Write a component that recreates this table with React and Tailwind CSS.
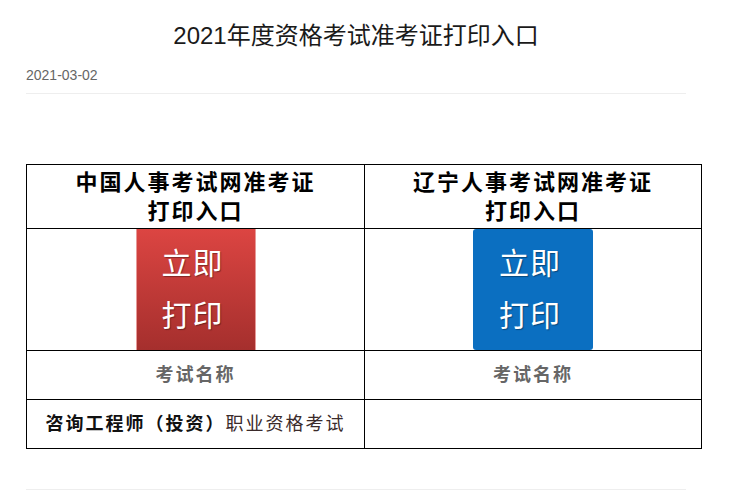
import React from "react";

const sans = { fontFamily: '"Liberation Sans", "Noto Sans CJK SC", sans-serif' };

function PrintButton({ color }) {
  const cls =
    color === "red"
      ? "bg-gradient-to-b from-[#dc4542] to-[#a52f2d] border-x border-[#e79a98]"
      : "bg-[#0b6fc1] rounded-[3px]";
  return (
    <div
      className={`w-[120px] h-[121px] flex flex-col items-center justify-center text-white text-[30px] leading-[52px] tracking-[1px] pr-[6px] ${cls}`}
      style={{ textShadow: "1px 1px 1px rgba(0,0,0,0.35)" }}
    >
      <span>立即</span>
      <span>打印</span>
    </div>
  );
}

export default function App() {
  return (
    <div className="bg-white w-[729px] h-[498px] overflow-hidden" style={sans}>
      <div className="ml-[26px] w-[660px]">
        <h1 className="pt-[18px] text-center text-[24px] leading-[36px] text-[#1a1a1a] font-normal">
          2021年度资格考试准考证打印入口
        </h1>
        <div className="mt-[11px] pb-[8px] text-[14px] leading-[20px] text-[#666] border-b border-[#eeeeee]">
          2021-03-02
        </div>
        <div className="mt-[70px] w-[676px] grid grid-cols-[338px_337px] border-l border-t border-black text-black">
          <div className="h-[64px] border-r border-b border-black flex flex-col items-center justify-center text-[22px] leading-[29px] font-bold tracking-[2px]">
            <span>中国人事考试网准考证</span>
            <span>打印入口</span>
          </div>
          <div className="h-[64px] border-r border-b border-black flex flex-col items-center justify-center text-[22px] leading-[29px] font-bold tracking-[2px]">
            <span>辽宁人事考试网准考证</span>
            <span>打印入口</span>
          </div>
          <div className="h-[122px] border-r border-b border-black flex justify-center items-start">
            <PrintButton color="red" />
          </div>
          <div className="h-[122px] border-r border-b border-black flex justify-center items-start">
            <PrintButton color="blue" />
          </div>
          <div className="h-[49px] border-r border-b border-black flex items-center justify-center text-[18px] font-bold text-[#666] tracking-[2px]">
            考试名称
          </div>
          <div className="h-[49px] border-r border-b border-black flex items-center justify-center text-[18px] font-bold text-[#666] tracking-[2px]">
            考试名称
          </div>
          <div className="h-[49px] border-r border-b border-black flex items-center justify-center text-[18px] tracking-[2px]">
            <span className="font-bold text-[#111]">咨询工程师（投资）</span>
            <span className="text-[#3a2a2a]">职业资格考试</span>
          </div>
          <div className="h-[49px] border-r border-b border-black"></div>
        </div>
        <div className="mt-[40px] border-b border-[#eeeeee]"></div>
      </div>
    </div>
  );
}
